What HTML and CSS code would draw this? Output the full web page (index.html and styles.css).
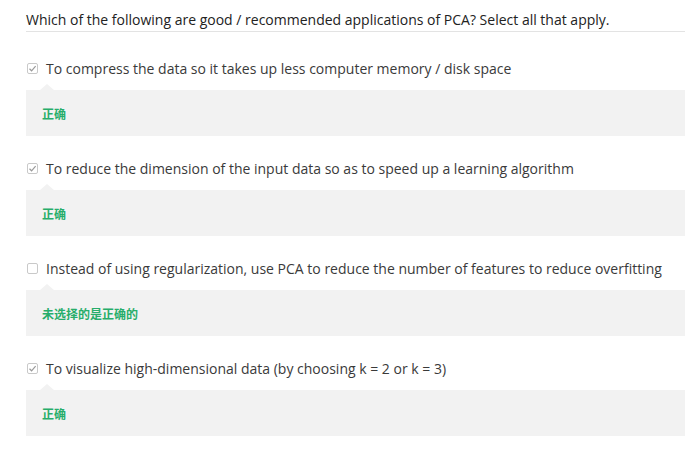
FILE: index.html
```html
<!DOCTYPE html>
<html>
<head>
<meta charset="utf-8">
<link rel="stylesheet" href="styles.css">
</head>
<body>
<div class="quiz">
  <div class="prompt">Which of the following are good / recommended applications of PCA? Select all that apply.</div>
  <ul class="options">
    <li class="option">
      <div class="choice"><span class="box checked"><svg viewBox="0 0 11 11" width="11" height="11"><path d="M2.5 5.8 L4.6 7.8 L8.6 3.2" fill="none" stroke="#9a9a9a" stroke-width="1.2"/></svg></span><span class="label">To compress the data so it takes up less computer memory / disk space</span></div>
      <div class="feedback"><span class="verdict">正确</span></div>
    </li>
    <li class="option">
      <div class="choice"><span class="box checked"><svg viewBox="0 0 11 11" width="11" height="11"><path d="M2.5 5.8 L4.6 7.8 L8.6 3.2" fill="none" stroke="#9a9a9a" stroke-width="1.2"/></svg></span><span class="label">To reduce the dimension of the input data so as to speed up a learning algorithm</span></div>
      <div class="feedback"><span class="verdict">正确</span></div>
    </li>
    <li class="option">
      <div class="choice"><span class="box"></span><span class="label">Instead of using regularization, use PCA to reduce the number of features to reduce overfitting</span></div>
      <div class="feedback"><span class="verdict">未选择的是正确的</span></div>
    </li>
    <li class="option">
      <div class="choice"><span class="box checked"><svg viewBox="0 0 11 11" width="11" height="11"><path d="M2.5 5.8 L4.6 7.8 L8.6 3.2" fill="none" stroke="#9a9a9a" stroke-width="1.2"/></svg></span><span class="label">To visualize high-dimensional data (by choosing k = 2 or k = 3)</span></div>
      <div class="feedback"><span class="verdict">正确</span></div>
    </li>
  </ul>
</div>
</body>
</html>
```
FILE: styles.css
```css
html, body {
  margin: 0;
  padding: 0;
  background: #fff;
}
body {
  font-family: "Open Sans", "Noto Sans CJK SC", sans-serif;
  color: #333;
}
.quiz {
  padding-left: 26px;
  padding-right: 1px;
}
.prompt {
  font-size: 14px;
  line-height: 20px;
  padding-top: 10px;
  padding-bottom: 1px;
  border-bottom: 1px solid #e3e3e3;
  color: #222;
}
.options {
  list-style: none;
  margin: 0;
  padding: 0;
}
.option {
  padding-top: 26px;
  padding-bottom: 0;
}
.option + .option {
  padding-top: 22px;
}
.choice {
  display: flex;
  align-items: center;
  height: 20px;
  padding-left: 1px;
}
.box {
  width: 9px;
  height: 9px;
  border: 1px solid #c9c9c9;
  border-radius: 2px;
  margin-right: 8px;
  position: relative;
  background: #fff;
}
.box svg {
  position: absolute;
  left: -1px;
  top: -1px;
}
.label {
  font-size: 14px;
  color: #3a3a3a;
}
.feedback {
  position: relative;
  margin-top: 12px;
  height: 46px;
  background: #f2f2f2;
  display: flex;
  align-items: center;
  padding-left: 16px;
}
.feedback::before {
  content: "";
  position: absolute;
  left: 14px;
  top: -6px;
  border-left: 7px solid transparent;
  border-right: 7px solid transparent;
  border-bottom: 6px solid #f2f2f2;
}
.verdict {
  font-family: "Noto Sans CJK SC", sans-serif;
  font-size: 12px;
  font-weight: 700;
  color: #27ad6a;
}
```
